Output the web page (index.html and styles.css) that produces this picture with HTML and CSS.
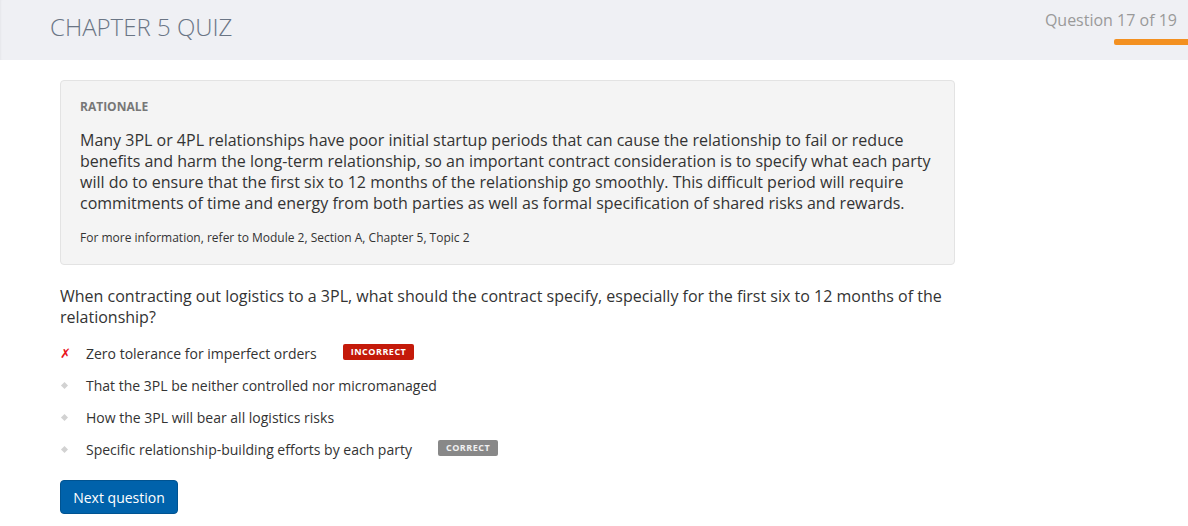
FILE: index.html
```html
<!DOCTYPE html>
<html lang="en">
<head>
<meta charset="utf-8">
<title>Chapter 5 Quiz</title>
<link rel="stylesheet" href="styles.css">
</head>
<body>
<header class="top">
  <h1 class="title">CHAPTER 5 QUIZ</h1>
  <div class="progress">
    <div class="progress-label">Question 17 of 19</div>
    <div class="progress-bar"></div>
  </div>
</header>
<main class="content">
  <section class="rationale">
    <h2 class="rationale-head">RATIONALE</h2>
    <p class="rationale-text">Many 3PL or 4PL relationships have poor initial startup periods that can cause the relationship to fail or reduce benefits and harm the long-term relationship, so an important contract consideration is to specify what each party will do to ensure that the first six to 12 months of the relationship go smoothly. This difficult period will require commitments of time and energy from both parties as well as formal specification of shared risks and rewards.</p>
    <p class="rationale-ref">For more information, refer to Module 2, Section A, Chapter 5, Topic 2</p>
  </section>
  <p class="question">When contracting out logistics to a 3PL, what should the contract specify, especially for the first six to 12 months of the relationship?</p>
  <ul class="answers">
    <li class="answer"><span class="mark mark-wrong">✗</span><span class="answer-text">Zero tolerance for imperfect orders</span><span class="badge badge-incorrect">INCORRECT</span></li>
    <li class="answer"><span class="mark"><span class="dot"></span></span><span class="answer-text">That the 3PL be neither controlled nor micromanaged</span></li>
    <li class="answer"><span class="mark"><span class="dot"></span></span><span class="answer-text">How the 3PL will bear all logistics risks</span></li>
    <li class="answer"><span class="mark"><span class="dot"></span></span><span class="answer-text">Specific relationship-building efforts by each party</span><span class="badge badge-correct">CORRECT</span></li>
  </ul>
  <button class="next">Next question</button>
</main>
</body>
</html>
```

FILE: styles.css
```css
* { box-sizing: border-box; }
html, body { margin: 0; padding: 0; }
body {
  font-family: "Open Sans", "Noto Sans", sans-serif;
  background: #fff;
  color: #333;
  width: 1188px;
  height: 526px;
  overflow: hidden;
}
.top {
  height: 60px;
  background: #eff0f4;
  display: flex;
  justify-content: space-between;
  align-items: flex-start;
  box-shadow: inset 2px 0 2px -1px rgba(0,0,0,0.04);
}
.title {
  margin: 0;
  padding: 10px 0 0 50px;
  font-weight: 300;
  font-size: 24px;
  line-height: 33px;
  color: #6a7585;
}
.progress {
  display: flex;
  flex-direction: column;
  align-items: flex-end;
  padding-top: 9px;
}
.progress-label {
  font-size: 16px;
  line-height: 22px;
  color: #9a9a9a;
  padding-right: 11px;
}
.progress-bar {
  margin-top: 8px;
  width: 74px;
  height: 6px;
  background: #f39020;
  border-radius: 2px 0 0 2px;
}
.content {
  padding: 20px 0 0 60px;
  width: 955px;
}
.rationale {
  background: #f4f4f4;
  border: 1px solid #e3e3e3;
  border-radius: 4px;
  padding: 18px 19px 18px;
}
.rationale-head {
  margin: 0;
  font-size: 12px;
  line-height: 16px;
  font-weight: 700;
  color: #777;
}
.rationale-text {
  margin: 15px 0 0;
  font-size: 16px;
  line-height: 21px;
  color: #333;
}
.rationale-ref {
  margin: 16px 0 0;
  font-size: 12px;
  line-height: 16px;
  color: #333;
}
.question {
  margin: 21px 0 0;
  font-size: 16px;
  line-height: 21px;
  color: #333;
}
.answers {
  list-style: none;
  margin: 15px 0 0;
  padding: 0;
  display: flex;
  flex-direction: column;
  gap: 12px;
}
.answer {
  display: flex;
  align-items: center;
  height: 20px;
  font-size: 14px;
}
.mark {
  width: 26px;
  display: flex;
  align-items: center;
  flex: none;
}
.mark-wrong {
  color: #e8141b;
  font-size: 13px;
  font-weight: 700;
  font-style: italic;
  font-family: "DejaVu Sans", sans-serif;
}
.dot {
  display: block;
  width: 5px;
  height: 5px;
  margin-left: 2px;
  background: #d2d2d2;
  transform: rotate(45deg);
}
.answer-text { color: #333; }
.badge {
  margin-left: 26px;
  font-size: 9px;
  font-weight: 700;
  letter-spacing: 0.5px;
  color: #fff;
  line-height: 16px;
  height: 16px;
  padding: 0 8px;
  border-radius: 2px;
  position: relative;
  top: -1px;
}
.badge-incorrect { background: #c41a0a; }
.badge-correct { background: #888; color: #f0f0f0; }
.next {
  margin-top: 21px;
  font-family: "Open Sans", sans-serif;
  font-size: 14px;
  color: #fff;
  background: #0062ab;
  border: 1px solid #005391;
  border-radius: 4px;
  width: 118px;
  height: 34px;
  padding: 0;
  cursor: pointer;
}
```
